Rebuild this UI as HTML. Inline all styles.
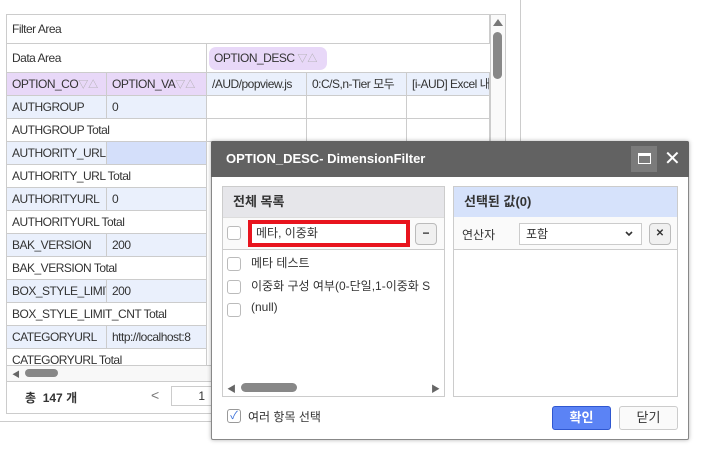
<!DOCTYPE html>
<html><head><meta charset="utf-8"><style>
*{box-sizing:border-box;margin:0;padding:0}
body{width:710px;height:451px;background:#fff;font-family:"Liberation Sans","Noto Sans CJK KR",sans-serif;font-size:12px;color:#333;position:relative;overflow:hidden}
.a{position:absolute;white-space:nowrap}
.c{position:absolute;border-right:1px solid #ccc;border-bottom:1px solid #ccc;padding-left:5px;line-height:22px;white-space:nowrap;overflow:hidden;font-size:12px;letter-spacing:-0.5px}
.cb{position:absolute;width:14px;height:14px;border:1px solid #bbb;border-radius:3px;background:#fff}
.ic{color:#aaa;font-size:10px;letter-spacing:0}
</style></head><body>
<div class="a" style="left:520px;top:0;width:1px;height:141px;background:#ccc"></div>
<div class="a" style="left:0;top:421px;width:211px;height:1px;background:#ccc"></div>
<div class="a" style="left:6px;top:14px;width:500px;height:400px;border:1px solid #ccc;background:#fff"></div>
<div class="c" style="left:7px;top:15px;width:483px;height:29px;line-height:29px">Filter Area</div>
<div class="c" style="left:7px;top:44px;width:200px;height:29px;line-height:29px">Data Area</div>
<div class="c" style="left:207px;top:44px;width:283px;height:29px;border-right:none"></div>
<div class="a" style="left:209px;top:47px;width:118px;height:23px;background:#e8d8f8;border-radius:7px;line-height:23px;padding-left:5px;letter-spacing:-0.5px">OPTION_DESC <span class="ic">▽△</span></div>
<div class="c" style="left:7px;top:73px;width:100px;height:23px;background:#e8d8f8">OPTION_CO<span class="ic">▽△</span></div>
<div class="c" style="left:107px;top:73px;width:100px;height:23px;background:#e8d8f8">OPTION_VA<span class="ic">▽△</span></div>
<div class="c" style="left:207px;top:73px;width:100px;height:23px;background:#eaf0fc">/AUD/popview.js</div>
<div class="c" style="left:307px;top:73px;width:100px;height:23px;background:#eaf0fc">0:C/S,n-Tier 모두</div>
<div class="c" style="left:407px;top:73px;width:83px;height:23px;background:#eaf0fc">[i-AUD] Excel 내</div>
<div class="c" style="left:7px;top:96px;width:100px;height:23px;background:#eaf0fc">AUTHGROUP</div><div class="c" style="left:107px;top:96px;width:100px;height:23px;background:#eaf0fc">0</div>
<div class="c" style="left:207px;top:96px;width:100px;height:23px"></div><div class="c" style="left:307px;top:96px;width:100px;height:23px"></div><div class="c" style="left:407px;top:96px;width:83px;height:23px"></div>
<div class="c" style="left:7px;top:119px;width:200px;height:23px">AUTHGROUP Total</div>
<div class="c" style="left:207px;top:119px;width:100px;height:23px"></div><div class="c" style="left:307px;top:119px;width:100px;height:23px"></div><div class="c" style="left:407px;top:119px;width:83px;height:23px"></div>
<div class="c" style="left:7px;top:142px;width:100px;height:23px;background:#eaf0fc">AUTHORITY_URL</div><div class="c" style="left:107px;top:142px;width:100px;height:23px;background:#d4dffa"></div>
<div class="c" style="left:7px;top:165px;width:200px;height:23px">AUTHORITY_URL Total</div>
<div class="c" style="left:7px;top:188px;width:100px;height:23px;background:#eaf0fc">AUTHORITYURL</div><div class="c" style="left:107px;top:188px;width:100px;height:23px;background:#eaf0fc">0</div>
<div class="c" style="left:7px;top:211px;width:200px;height:23px">AUTHORITYURL Total</div>
<div class="c" style="left:7px;top:234px;width:100px;height:23px;background:#eaf0fc">BAK_VERSION</div><div class="c" style="left:107px;top:234px;width:100px;height:23px;background:#eaf0fc">200</div>
<div class="c" style="left:7px;top:257px;width:200px;height:23px">BAK_VERSION Total</div>
<div class="c" style="left:7px;top:280px;width:100px;height:23px;background:#eaf0fc">BOX_STYLE_LIMIT</div><div class="c" style="left:107px;top:280px;width:100px;height:23px;background:#eaf0fc">200</div>
<div class="c" style="left:7px;top:303px;width:200px;height:23px">BOX_STYLE_LIMIT_CNT Total</div>
<div class="c" style="left:7px;top:326px;width:100px;height:23px;background:#eaf0fc">CATEGORYURL</div><div class="c" style="left:107px;top:326px;width:100px;height:23px;background:#eaf0fc">http://localhost:8</div>
<div class="c" style="left:7px;top:349px;width:200px;height:16px;border-bottom:none">CATEGORYURL Total</div>
<div class="a" style="left:7px;top:365px;width:205px;height:17px;background:#f8f8f8;border-top:1px solid #ccc;border-bottom:1px solid #ccc"></div>
<div class="a" style="left:12px;top:369px;font-size:8px;color:#666">◀</div>
<div class="a" style="left:25px;top:369px;width:33px;height:8px;border-radius:4px;background:#888"></div>
<div class="a" style="left:490px;top:15px;width:15px;height:350px;border-left:1px solid #ccc;background:#fafafa"></div>
<div class="a" style="left:493px;top:19px;width:0;height:0;border-left:5px solid transparent;border-right:5px solid transparent;border-bottom:7px solid #777"></div>
<div class="a" style="left:493px;top:32px;width:9px;height:47px;border-radius:5px;background:#888"></div>
<div class="a" style="left:25px;top:389px;font-weight:bold;font-size:12px">총 &nbsp;147 개</div>
<div class="a" style="left:151px;top:387px;color:#777;font-size:14px">&lt;</div>
<div class="a" style="left:171px;top:386px;width:45px;height:20px;border:1px solid #ccc;text-align:right;padding-right:10px;line-height:18px">1</div>
<div class="a" style="left:211px;top:141px;width:478px;height:299px;background:#fff;border:1px solid #888;box-shadow:0 0 4px rgba(0,0,0,.3);border-radius:2px"></div>
<div class="a" style="left:211px;top:141px;width:478px;height:36px;background:#626262;border-radius:2px 2px 0 0;color:#fff;font-weight:bold;font-size:13px;line-height:36px;padding-left:15px">OPTION_DESC- DimensionFilter</div>
<div class="a" style="left:631px;top:146px;width:26px;height:26px;background:#7b7b7b"></div>
<div class="a" style="left:638px;top:153px;width:13px;height:11px;border:1.5px solid #fff;border-top-width:3px"></div>
<div class="a" style="left:664px;top:146px;color:#fff;font-size:20px;line-height:26px">✕</div>
<div class="a" style="left:222px;top:186px;width:223px;height:211px;border:1px solid #ccc"></div>
<div class="a" style="left:223px;top:187px;width:221px;height:30px;background:#e6e6ea;font-weight:bold;font-size:13px;line-height:30px;padding-left:10px">전체 목록</div>
<div class="a" style="left:223px;top:217px;width:221px;height:33px;border-top:1px solid #ddd;border-bottom:1px solid #ccc;background:#fafafa"></div>
<div class="cb" style="left:227px;top:226px"></div>
<div class="a" style="left:248px;top:220px;width:162px;height:27px;border:4px solid #e8141e;background:#fff;padding-left:4px;line-height:19px">메타, 이중화</div>
<div class="a" style="left:415px;top:223px;width:22px;height:22px;border:1px solid #bbb;border-radius:4px;background:#f0f0f0;text-align:center;line-height:19px;font-weight:bold">−</div>
<div class="cb" style="left:227px;top:257px"></div><div class="a" style="left:251px;top:254px">메타 테스트</div>
<div class="cb" style="left:227px;top:280px"></div><div class="a" style="left:251px;top:277px;width:193px;overflow:hidden">이중화 구성 여부(0-단일,1-이중화 S</div>
<div class="cb" style="left:227px;top:303px"></div><div class="a" style="left:251px;top:300px">(null)</div>
<div class="a" style="left:227px;top:382px;font-size:9px;color:#666">◀</div>
<div class="a" style="left:241px;top:383px;width:56px;height:9px;border-radius:5px;background:#888"></div>
<div class="a" style="left:431px;top:382px;font-size:9px;color:#666">▶</div>
<div class="a" style="left:453px;top:186px;width:225px;height:211px;border:1px solid #ccc"></div>
<div class="a" style="left:454px;top:187px;width:223px;height:30px;background:#d6e2fb;font-weight:bold;font-size:13px;line-height:30px;padding-left:10px">선택된 값(0)</div>
<div class="a" style="left:454px;top:217px;width:223px;height:33px;border-bottom:1px solid #ccc;background:#fafafa"></div>
<div class="a" style="left:462px;top:226px">연산자</div>
<div class="a" style="left:519px;top:223px;width:123px;height:22px;border:1px solid #ccc;background:#fff;padding-left:6px;line-height:20px">포함<svg style="position:absolute;right:8px;top:7px" width="8" height="6"><path d="M1 1L4 4L7 1" stroke="#333" stroke-width="1.6" fill="none"/></svg></div>
<div class="a" style="left:649px;top:223px;width:22px;height:22px;border:1px solid #bbb;border-radius:4px;background:#f0f0f0;text-align:center;line-height:20px;font-size:10px;font-weight:bold">✕</div>
<div class="cb" style="left:227px;top:409px;border-color:#999;color:#3a6fd8;font-size:11px;line-height:12px;text-align:center">✓</div>
<div class="a" style="left:248px;top:408px">여러 항목 선택</div>
<div class="a" style="left:552px;top:406px;width:59px;height:24px;background:#5b83f5;border:1px solid #2f57d0;border-radius:3px;color:#fff;font-weight:bold;text-align:center;line-height:22px;font-size:13px">확인</div>
<div class="a" style="left:619px;top:406px;width:59px;height:24px;background:#fafafa;border:1px solid #ccc;border-radius:3px;text-align:center;line-height:22px;font-size:13px">닫기</div>
</body></html>
